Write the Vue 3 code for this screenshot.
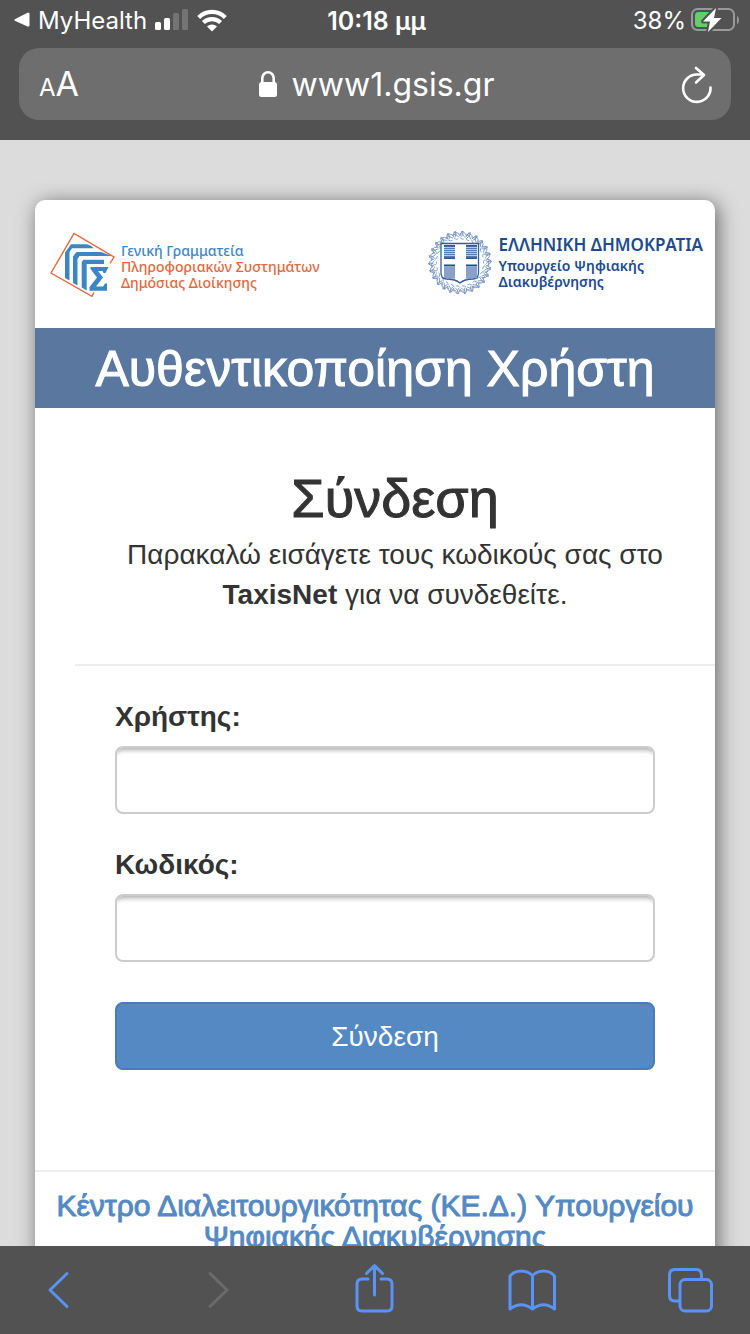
<script setup>
import { ref } from 'vue'

const username = ref('')
const password = ref('')

const leaves = Array.from({ length: 26 }, (_, i) => (i * 360) / 26)
const stripes = [0, 3, 5, 7, 9, 11, 13]
</script>

<template>
  <div class="screen">
    <header class="chrome">
      <div class="status">
        <div class="status-left">
          <svg width="16" height="16" viewBox="0 0 16 16" aria-hidden="true">
            <path d="M.8 7.200 13.500 .8Q15.500 .2 15.500 1.800V13.400Q15.500 15 13.500 14.400L.8 8.800Q0 8 .8 7.200Z" fill="#fff" />
          </svg>
          <span class="back-app">MyHealth</span>
          <svg width="34" height="22" viewBox="0 0 34 22" fill="#fff" aria-hidden="true">
            <rect x="0" y="13" width="6" height="8" rx="1.500" />
            <rect x="9" y="9" width="6" height="12" rx="1.500" />
            <rect x="18" y="4" width="6" height="17" rx="1.500" opacity=".2" />
            <rect x="27" y="0" width="6" height="21" rx="1.500" opacity=".2" />
          </svg>
          <svg class="wifi" width="30" height="23" viewBox="0 0 30 23" aria-hidden="true">
            <g fill="none" stroke="#fff" stroke-width="4.200">
              <path d="M1.700 8.400a19 19 0 0 1 26.600 0" />
              <path d="M6.400 13.600a12.500 12.500 0 0 1 17.200 0" />
            </g>
            <path d="M10 17.500a7.300 7.300 0 0 1 10 0L15 22.600Z" fill="#fff" />
          </svg>
        </div>
        <time class="clock">10:18 μμ</time>
        <div class="status-right">
          <span>38%</span>
          <svg width="48" height="26" viewBox="0 0 48 26" aria-hidden="true">
            <rect x="1" y="2" width="42" height="21" rx="5.500" fill="none" stroke="#999" stroke-width="2" />
            <path d="M46 9v8q2-1 2-4t-2-4Z" fill="#999" />
            <path d="M7.500 5H18v15H7.500Q4 20 4 16.500v-8Q4 5 7.500 5Z" fill="#65cf66" />
            <path d="m25 1-13 13.500h7L17 25 30.500 11H23Z" fill="#fff" stroke="#525252" stroke-width="4" paint-order="stroke" stroke-linejoin="round" />
          </svg>
        </div>
      </div>
      <div class="address">
        <button class="plain text-size" type="button" aria-label="Text size"><small>A</small>A</button>
        <div class="host">
          <svg width="20" height="28" viewBox="0 0 20 28" aria-hidden="true">
            <path d="M4.300 14V8a5.700 5.700 0 0 1 11.400 0v6" fill="none" stroke="#fff" stroke-width="2.600" />
            <rect x="1" y="12" width="18" height="15" rx="2.500" fill="#fff" />
          </svg>
          <span>www1.gsis.gr</span>
        </div>
        <button class="plain reload" type="button" aria-label="Reload">
          <svg width="32" height="38" viewBox="0 0 32 38" fill="none" stroke="#fff" stroke-width="2.600" stroke-linecap="round" stroke-linejoin="round">
            <path d="M29.500 22.500A13.700 13.700 0 1 1 16 9.500h6" />
            <path d="m15 3 8 7-8 7.500" />
          </svg>
        </button>
      </div>
    </header>

    <main class="page">
      <section class="card">
        <div class="brands">
          <div class="brand">
            <svg width="66" height="66" viewBox="0 0 66 66" aria-hidden="true">
              <path d="M44 62.500 42 66.300 1 43 24 3.500 64 27 60 33.500" fill="none" stroke="#e2683c" stroke-width="1.400" />
              <g fill="#3c86c6">
                <path d="M15 22.500 21 14.300H37q4 1 7 4H22L19.500 22V50.500L15 48Z" />
                <path d="M23 26.500 26.500 22H51l11 4H29.500L27.500 29V55.500L23 53Z" />
                <path d="M31.700 32 33.500 29.700H54V34H36.700V60.500L31.700 57.500Z" />
                <path d="M40.500 37H58.500L55.500 43H53.500L52.500 41H48L53 47.500 46 56.500H53L55 53.500H57V60.700H39.500V57L47 47.500 40.500 39Z" />
              </g>
            </svg>
            <p class="brand-text gray-secretariat"><span class="first">Γενική Γραμματεία</span><br>Πληροφοριακών Συστημάτων<br>Δημόσιας Διοίκησης</p>
          </div>
          <div class="brand">
            <svg width="66" height="66" viewBox="0 0 66 66" aria-hidden="true">
              <g fill="none" stroke="#7391c0" stroke-width=".8">
                <circle cx="33" cy="32.500" r="28.500" stroke-dasharray="4 3" />
                <g v-for="a in leaves" :key="a" :transform="`rotate(${a} 33 32.500)`">
                  <path d="M32 7q-4-2-5-5 5 0 6 4M33 6q0-4 3-5 1 3-2 6M31 9q-2 1-4-1" />
                </g>
              </g>
              <path d="M14 13.500h37.500v29q0 6-5 6.500-9 0-13.500 4-4.500-4-14-4-5-.5-5-6.500Z" fill="#fff" stroke="#335f9f" stroke-width="1.300" />
              <g fill="#b9c9e0">
                <path d="M17 15.500h11v13H17zM39 15.500h11v13H39zM17 35h11v13H17zM39 35h11v13H39z" />
              </g>
              <g stroke="#3e67a4" stroke-width=".8">
                <template v-for="s in stripes" :key="s">
                  <path :d="`M17 ${15.500 + s}h11M39 ${15.500 + s}h11`" />
                  <path :d="`M17 ${35 + s}h11M39 ${35 + s}h11`" />
                </template>
              </g>
              <path d="M17 16h11M39 16h11M17 28h11M39 28h11M17 35.500h11M39 35.500h11" stroke="#1d4b8f" stroke-width="1.500" />
            </svg>
            <p class="brand-text ministry"><strong>ΕΛΛΗΝΙΚΗ ΔΗΜΟΚΡΑΤΙΑ</strong><br>Υπουργείο Ψηφιακής<br>Διακυβέρνησης</p>
          </div>
        </div>
        <h1 class="banner">Αυθεντικοποίηση Χρήστη</h1>
        <div class="login">
          <h2>Σύνδεση</h2>
          <p>Παρακαλώ εισάγετε τους κωδικούς σας στο <b>TaxisNet</b> για να συνδεθείτε.</p>
          <hr>
          <form @submit.prevent>
            <label for="username">Χρήστης:</label>
            <input id="username" v-model="username" type="text" autocomplete="username">
            <label for="password">Κωδικός:</label>
            <input id="password" v-model="password" type="password" autocomplete="current-password">
            <button type="submit">Σύνδεση</button>
          </form>
        </div>
        <footer class="credits">
          <a href="#">Κέντρο Διαλειτουργικότητας (ΚΕ.Δ.) Υπουργείου Ψηφιακής Διακυβέρνησης</a>
        </footer>
      </section>
    </main>

    <nav class="toolbar">
      <button class="plain" type="button" aria-label="Back">
        <svg width="48" height="48" viewBox="0 0 48 48"><path d="M32 7.500 15 24l17 16.500" /></svg>
      </button>
      <button class="plain" type="button" aria-label="Forward" disabled>
        <svg width="48" height="48" viewBox="0 0 48 48"><path d="m17 7.500 17 16.500-17 16.500" /></svg>
      </button>
      <button class="plain" type="button" aria-label="Share">
        <svg width="48" height="48" viewBox="0 0 48 48"><path d="M17 13h-6q-5 0-5 5v22q0 5 5 5h25q5 0 5-5V18q0-5-5-5h-6M23.500 29V0M15.500 7.500 23.500-.5l8 8" /></svg>
      </button>
      <button class="plain" type="button" aria-label="Bookmarks">
        <svg width="48" height="48" viewBox="0 0 48 48"><path d="M23.500 9.500Q19 5 12.500 5 5 5 1 10v33q11-8.500 22.500 0 11-8.500 22 0V10q-4-5-11-5-6.500 0-11 4.500Zm0 0V43" /></svg>
      </button>
      <button class="plain" type="button" aria-label="Tabs">
        <svg width="48" height="48" viewBox="0 0 48 48"><path d="M12.500 35H8q-5.500 0-5.500-5.500V9q0-5.500 5.500-5.500h21q5.500 0 5.500 5.500v4.500" /><rect x="13" y="13.500" width="31.500" height="31.500" rx="5" /></svg>
      </button>
    </nav>
  </div>
</template>

<style>
body {
  margin: 0;
  background: #dcdcdc;
}
</style>

<style scoped>
* {
  box-sizing: border-box;
}

svg {
  display: block;
  flex: none;
  overflow: visible;
}

.screen {
  display: flex;
  flex-direction: column;
  height: 100vh;
  overflow: hidden;
  color: #333;
  font: 28px/40px "Liberation Sans", Arial, sans-serif;
}

.plain {
  display: flex;
  padding: 0;
  border: 0;
  background: none;
  color: inherit;
  font: inherit;
}

.chrome {
  flex: none;
  padding: 0 19px 20px;
  background: #525252;
  color: #fff;
  font-family: Inter, "Liberation Sans", sans-serif;
}

.status {
  display: grid;
  grid-template-columns: 1fr auto 1fr;
  align-items: center;
  height: 40px;
  margin: 0 -8px 8px -5px;
  font-size: 24px;
  line-height: 38px;
}

.status-left,
.status-right {
  display: flex;
  align-items: center;
  gap: 8px;
}

.status-right {
  justify-content: flex-end;
  gap: 5px;
}

.status span,
.clock {
  padding-top: 2px;
}

.clock {
  font-size: 25px;
  font-weight: 600;
}

.address {
  display: grid;
  grid-template-columns: 1fr auto 1fr;
  align-items: center;
  height: 72px;
  padding: 0 18px 0 20px;
  border-radius: 20px;
  background: #6e6e6e;
  font-size: 32px;
}

.text-size {
  align-items: baseline;
  padding-top: 4px;
  font-size: 34px;
}

.text-size small {
  font-size: 24px;
}

.host {
  display: flex;
  align-items: center;
  gap: 14px;
}

.host span {
  padding-top: 2px;
}

.reload {
  justify-self: end;
}

.page {
  flex: 1;
  min-height: 0;
  overflow: hidden;
  padding: 60px 35px 0;
  background: #dcdcdc;
}

.card {
  border-radius: 10px;
  background: #fff;
  box-shadow: 3px 3px 20px #666;
}

.brands {
  display: flex;
  justify-content: space-between;
  height: 128px;
  padding: 30px 12px 0 15px;
}

.brand {
  display: flex;
  gap: 5px;
}

.brand-text {
  margin: 0;
  font: 14px/16px "Noto Sans", sans-serif;
  white-space: nowrap;
}

.gray-secretariat {
  padding-top: 13px;
  color: #e2683c;
  font-weight: 500;
}

.gray-secretariat .first {
  color: #3c86c6;
}

.ministry {
  padding-top: 2px;
  color: #1d4b8f;
  font-weight: 600;
}

.ministry strong {
  font-size: 17px;
  line-height: 26px;
  font-weight: 600;
}

.banner {
  margin: 0;
  padding: 13px 16px 11px;
  background: #5a789f;
  color: #fff;
  font-size: 50px;
  line-height: 56px;
  font-weight: 400;
  text-align: center;
  -webkit-text-stroke: 1px;
}

.login {
  margin-left: 40px;
  padding: 57px 0 100px;
}

.login h2 {
  margin: 0;
  font-size: 54px;
  line-height: 66px;
  font-weight: 400;
  text-align: center;
  -webkit-text-stroke: 1px;
}

.login p {
  margin: 0;
  padding: 4px 40px 0;
  text-align: center;
}

.login hr {
  margin: 49px 0 31px;
  border: 0;
  border-top: 2px solid #eee;
}

.login form {
  display: flex;
  flex-direction: column;
  padding: 0 60px 0 40px;
}

.login label {
  margin-bottom: 9px;
  font-weight: 700;
}

.login input {
  width: 100%;
  height: 68px;
  margin: 0 0 31px;
  padding: 12px 24px;
  border: 2px solid #ccc;
  border-radius: 8px;
  background: #fff;
  box-shadow: inset 0 8px 5px -6px #aaa;
  font: inherit;
}

.login form button {
  height: 68px;
  margin-top: 9px;
  padding: 2px 24px 0;
  border: 2px solid #4a7ab8;
  border-radius: 8px;
  background: #5489c3;
  color: #fff;
  font: inherit;
}

.credits {
  padding: 18px 16px;
  border-top: 2px solid #eee;
  text-align: center;
  font-size: 30px;
  line-height: 31px;
}

.credits a {
  color: #5489c3;
  text-decoration: none;
  -webkit-text-stroke: 1px;
}

.toolbar {
  display: flex;
  flex: none;
  align-items: center;
  justify-content: space-between;
  height: 88px;
  padding: 0 35px;
  background: #525252;
}

.toolbar svg {
  fill: none;
  stroke: #5a93f7;
  stroke-width: 3;
  stroke-linecap: round;
  stroke-linejoin: round;
}

.toolbar button:disabled svg {
  stroke: #6b6b6b;
}
</style>
